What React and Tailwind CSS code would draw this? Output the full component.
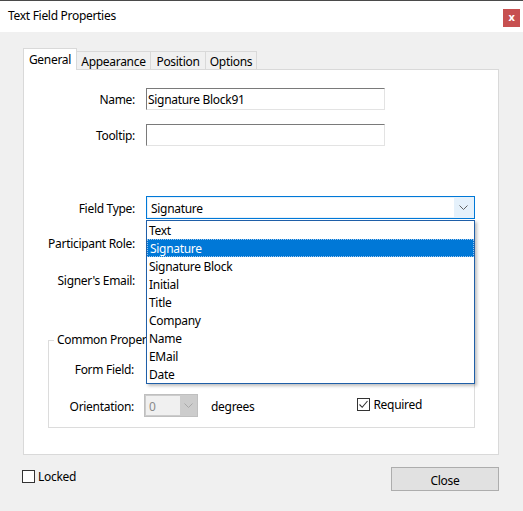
import React from 'react'

const items = ['Text', 'Signature', 'Signature Block', 'Initial', 'Title', 'Company', 'Name', 'EMail', 'Date']

function Chevron({ color = '#606060' }) {
  return (
    <svg width="9" height="5" viewBox="0 0 9 5" fill="none">
      <path d="M0.5 0.5 L4.5 4.5 L8.5 0.5" stroke={color} strokeWidth="1" />
    </svg>
  )
}

function Check() {
  return (
    <svg width="11" height="11" viewBox="0 0 11 11" fill="none">
      <path d="M1.5 5.5 L4.2 8.3 L9.5 2" stroke="#333" strokeWidth="1.1" />
    </svg>
  )
}

function Sunken({ value, className = '' }) {
  return (
    <div className={`h-[22px] w-[239px] bg-white border border-[#e3e3e3] border-t-[#7a7a7a] border-l-[#7a7a7a] flex items-center pl-[1px] pt-[2px] ${className}`}>
      {value}
    </div>
  )
}

export default function App() {
  return (
    <div className="w-[523px] h-[511px] bg-[#f0f0f0] border-t border-[#4a4a4a] flex flex-col text-[12px] tracking-[-0.3px] text-black font-['Noto_Sans',sans-serif] leading-none overflow-hidden select-none">
      {/* title bar */}
      <div className="h-[31px] bg-white flex items-center justify-between pl-[8px] pr-[3px]">
        <span className="pb-[1px]">Text Field Properties</span>
        <div className="w-[17px] h-[18px] bg-[#c75050] text-white text-[11px] font-bold flex items-center justify-center pb-[2px] mt-[2px]">x</div>
      </div>

      <div className="pl-[23px] pt-[17px]">
        {/* tabs */}
        <div className="flex items-end h-[21px] relative z-10">
          <div className="w-[54px] h-[22px] bg-white border border-b-0 border-[#d9d9d9] flex items-center justify-center">General</div>
          <div className="w-[74px] h-[19px] border border-l-0 border-b-0 border-[#d9d9d9] flex items-center justify-center pt-[2px]">Appearance</div>
          <div className="w-[55px] h-[19px] border border-l-0 border-b-0 border-[#d9d9d9] flex items-center justify-center pt-[2px]">Position</div>
          <div className="w-[51px] h-[19px] border border-l-0 border-b-0 border-[#d9d9d9] flex items-center justify-center pt-[2px]">Options</div>
        </div>

        {/* tab panel */}
        <div className="w-[476px] h-[386px] -mt-[1px] bg-white border border-[#d9d9d9] relative flex flex-col">
          <div className="flex items-center mt-[18px] h-[22px]">
            <span className="w-[111px] text-right pt-[2px]">Name:</span>
            <Sunken value="Signature Block91" className="ml-[11px]" />
          </div>
          <div className="flex items-center mt-[14px] h-[22px]">
            <span className="w-[111px] text-right pt-[2px]">Tooltip:</span>
            <Sunken value="" className="ml-[11px]" />
          </div>
          <div className="flex items-center mt-[50px] h-[23px]">
            <span className="w-[111px] text-right pt-[2px]">Field Type:</span>
            <div className="ml-[11px] w-[329px] h-[23px] border border-[#0078d7] bg-[#e5f1fb] flex items-center p-[1px]">
              <div className="flex-1 h-full bg-white flex items-center pl-[3px] pt-[2px]">Signature</div>
              <div className="w-[19px] flex justify-center"><Chevron /></div>
            </div>
          </div>
          <div className="flex items-center mt-[13px] h-[22px]">
            <span className="w-[111px] text-right pt-[2px]">Participant Role:</span>
          </div>
          <div className="flex items-center mt-[15px] h-[22px]">
            <span className="w-[111px] text-right pt-[2px]">Signer's Email:</span>
          </div>

          {/* group box */}
          <div className="ml-[24px] mt-[49px] w-[427px] h-[88px] border border-[#dcdcdc] relative">
            <span className="absolute -top-[7px] left-[5px] bg-white px-[3px]">Common Properties</span>
            <div className="flex items-center mt-[17px] h-[22px]">
              <span className="w-[85px] text-right pt-[2px]">Form Field:</span>
            </div>
            <div className="flex items-center mt-[14px] h-[23px]">
              <span className="w-[85px] text-right pt-[2px]">Orientation:</span>
              <div className="ml-[10px] w-[54px] h-[23px] bg-[#cccccc] border border-[#bfbfbf] flex items-center p-[1px]">
                <div className="w-[34px] h-full bg-[#f0f0f0] flex items-center pl-[3px] pt-[2px] text-[#8a8a8a]">0</div>
                <div className="flex-1 flex justify-center"><Chevron color="#a8a8a8" /></div>
              </div>
              <span className="ml-[13px] pt-[2px]">degrees</span>
              <div className="ml-[103px] flex items-center gap-[3px] -mt-[3px]">
                <div className="w-[13px] h-[13px] border border-[#333] bg-white flex items-center justify-center"><Check /></div>
                <span className="pt-[2px]">Required</span>
              </div>
            </div>
          </div>

          {/* open dropdown list */}
          <div className="absolute left-[122px] top-[150px] w-[329px] h-[164px] bg-white border border-[#1f5fa8] shadow-[2px_2px_3px_rgba(0,0,0,0.25)] flex flex-col">
            {items.map(it => (
              <div
                key={it}
                className={`h-[18px] flex items-center pl-[2px] pt-[2px] ${it === 'Signature' ? 'bg-[#0078d7] text-white border border-dotted border-[#9ec6ec] pl-[1px]' : ''}`}
              >
                {it}
              </div>
            ))}
          </div>
        </div>

        {/* bottom row */}
        <div className="flex items-start mt-[12px] h-[24px] -ml-[1px]">
          <div className="flex items-center mt-[2px]">
            <div className="w-[13px] h-[13px] border border-[#333] bg-white"></div>
            <span className="ml-[3px] pt-[2px]">Locked</span>
          </div>
          <div className="ml-auto mr-[24px] w-[108px] h-[24px] bg-[#e1e1e1] border border-[#adadad] flex items-center justify-center pt-[3px]">Close</div>
        </div>
      </div>
    </div>
  )
}
